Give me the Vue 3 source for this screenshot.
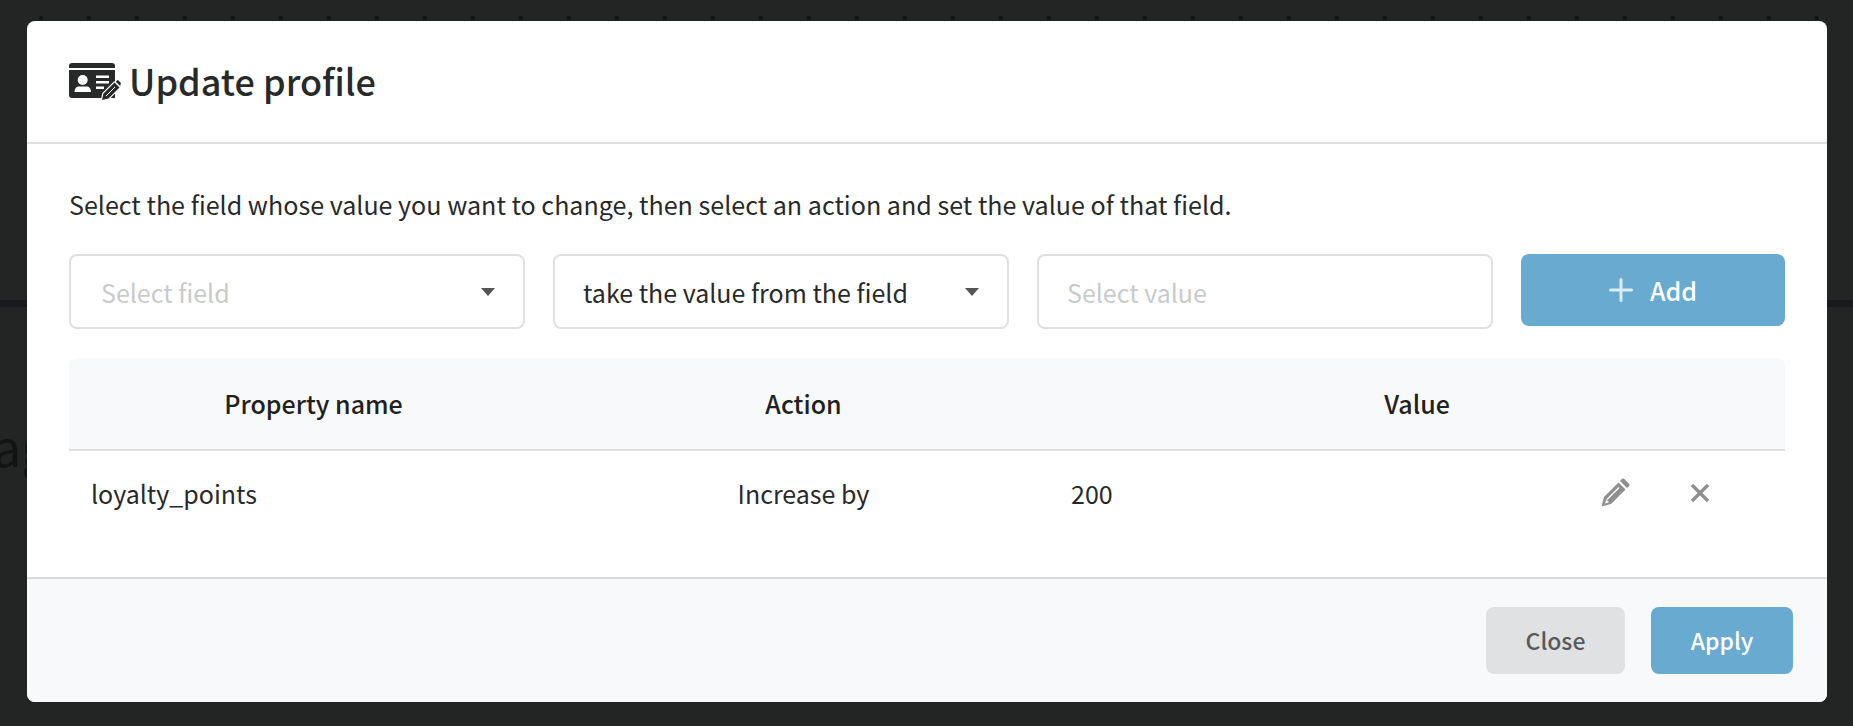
<template>
  <div class="page">
    <div class="backdrop">
      <div class="dots">
        <i v-for="n in 38" :key="n" class="dot"></i>
      </div>
      <div class="band"></div>
      <span class="behind-text">ag</span>
    </div>

    <div class="modal">
      <div class="modal-header">
        <svg class="title-icon" width="52" height="37" viewBox="0 0 52 37">
          <path fill="#282a2a" d="M3 0h40a3 3 0 0 1 3 3v2H0V3a3 3 0 0 1 3-3zM0 7h46v28H3a3 3 0 0 1-3-3z" />
          <circle cx="13.700" cy="17" r="5" fill="#fff" />
          <path fill="#fff" d="M5.500 29c0-3.500 2-5.500 4.500-5.500h7.500c2.500 0 4.500 2 4.500 5.500z" />
          <path fill="#fff" d="M27 12.500h13v2.500H27zM27 18h13v2.500H27zM27 23.500h8v2.500h-8z" />
          <path fill="#282a2a" stroke="#fff" stroke-width="2.400" stroke-linejoin="round" d="M33 37l1.500-6.500 11-11 5 5-11 11z" />
          <path fill="#282a2a" d="M33 37l1.500-6.500 11-11 5 5-11 11z" />
          <path stroke="#fff" stroke-width="1" d="M37 33l9-9" />
          <path fill="#282a2a" d="M46.800 18.700l1.200-1.200a1 1 0 0 1 1.500 0l2 2a1 1 0 0 1 0 1.500l-.2 2.200z" />
        </svg>
        <h2 class="title">Update profile</h2>
      </div>

      <div class="modal-body">
        <p class="hint">Select the field whose value you want to change, then select an action and set the value of that field.</p>

        <div class="form-row">
          <div class="control select placeholder field-select">
            <span>Select field</span>
            <i class="caret"></i>
          </div>
          <div class="control select">
            <span>take the value from the field</span>
            <i class="caret"></i>
          </div>
          <div class="control placeholder">
            <span>Select value</span>
          </div>
          <button class="btn btn-add">
            <svg width="24" height="24" viewBox="0 0 24 24" fill="none" stroke="#dcebf4" stroke-width="3" stroke-linecap="round">
              <line x1="12" y1="1.500" x2="12" y2="22.500"></line>
              <line x1="1.500" y1="12" x2="22.500" y2="12"></line>
            </svg>
            <span>Add</span>
          </button>
        </div>

        <div class="table">
          <div class="table-head">
            <div>Property name</div>
            <div>Action</div>
            <div>Value</div>
          </div>
          <div v-for="row in rows" :key="row.name" class="table-row">
            <div class="col-name">{{ row.name }}</div>
            <div class="col-action">{{ row.action }}</div>
            <div class="col-value">
              <span>{{ row.value }}</span>
              <div class="tools">
                <svg width="30" height="30" viewBox="0 0 30 30" fill="#8f8f8f">
                  <path d="M1.500 28.500L4 19 18.500 4.500 25.500 11.500 11 26z" />
                  <path d="M20 3l1.800-1.800a2 2 0 0 1 2.800 0l4.200 4.200a2 2 0 0 1 0 2.800L27 10z" />
                  <path fill="#fff" d="M5 25.500l1.200-4 2.800 2.800z" />
                  <path stroke="#fff" stroke-width="1.300" d="M7 21.500L19 9.500" />
                </svg>
                <svg width="20" height="20" viewBox="0 0 20 20" stroke="#8f8f8f" stroke-width="3.400" fill="none">
                  <line x1="2" y1="2" x2="18" y2="18"></line>
                  <line x1="18" y1="2" x2="2" y2="18"></line>
                </svg>
              </div>
            </div>
          </div>
        </div>
      </div>

      <div class="modal-footer">
        <button class="btn btn-close">Close</button>
        <button class="btn btn-apply">Apply</button>
      </div>
    </div>
  </div>
</template>

<script setup>
const rows = [
  { name: 'loyalty_points', action: 'Increase by', value: '200' }
];
</script>

<style>
html, body {
  background: #232524;
}
</style>

<style scoped>
.page {
  position: relative;
  width: 1853px;
  height: 726px;
  overflow: hidden;
  background: #232524;
  font-family: "Noto Sans CJK SC", "Noto Sans", sans-serif;
  color: #282a2a;
}

.backdrop {
  position: absolute;
  inset: 0;
}

.dots {
  position: absolute;
  top: 16px;
  left: 39px;
  display: flex;
  gap: 44px;
}

.dot {
  width: 4px;
  height: 4px;
  border-radius: 50%;
  background: #111312;
}

.band {
  position: absolute;
  top: 300px;
  left: 0;
  width: 100%;
  height: 7px;
  background: #17191c;
}

.behind-text {
  position: absolute;
  top: 413px;
  left: -7px;
  font-size: 50px;
  line-height: 64px;
  color: #121413;
}

.modal {
  position: absolute;
  top: 21px;
  left: 27px;
  width: 1800px;
  height: 681px;
  display: flex;
  flex-direction: column;
  background: #fff;
  border-radius: 8px;
  overflow: hidden;
}

.modal-header {
  height: 121px;
  flex: none;
  display: flex;
  align-items: center;
  gap: 8px;
  padding: 0 42px;
  border-bottom: 2px solid #dedfe0;
  box-sizing: content-box;
}

.title {
  margin: 0;
  padding-bottom: 4px;
  font-size: 36px;
  font-weight: 500;
  line-height: 48px;
}

.modal-body {
  flex: 1;
  padding: 42px 42px 0;
}

.hint {
  margin: 0;
  font-size: 25.08px;
  line-height: 36px;
}

.form-row {
  display: flex;
  gap: 28px;
  margin-top: 32px;
  align-items: flex-start;
}

.control {
  width: 456px;
  height: 75px;
  box-sizing: border-box;
  border: 2px solid #e0e0e0;
  border-radius: 8px;
  display: flex;
  align-items: center;
  justify-content: space-between;
  padding: 0 28px;
  font-size: 25px;
}

.field-select {
  padding-left: 30px;
}

.placeholder {
  color: #c9caca;
}

.caret {
  width: 0;
  height: 0;
  border-left: 7.5px solid transparent;
  border-right: 7.5px solid transparent;
  border-top: 8px solid #555;
}

.btn {
  border: none;
  border-radius: 8px;
  font-family: inherit;
  font-size: 25px;
  font-weight: 500;
  cursor: pointer;
}

.btn-add {
  width: 264px;
  height: 72px;
  background: #69aad0;
  color: #fff;
  display: flex;
  align-items: center;
  justify-content: center;
  gap: 17px;
}

.table {
  margin-top: 29px;
  font-size: 25px;
}

.table-head,
.table-row {
  display: grid;
  grid-template-columns: 489px 491px 1fr;
}

.table-head {
  height: 93px;
  padding-bottom: 2px;
  box-sizing: border-box;
  align-items: center;
  background: #f8f9fb;
  border-bottom: 2px solid #e0e1e3;
  border-radius: 8px 8px 0 0;
  font-weight: 500;
  color: #1f2121;
  text-align: center;
}

.table-row {
  height: 83px;
  align-items: center;
}

.col-name {
  padding-left: 22px;
}

.col-action {
  text-align: center;
}

.col-value {
  display: flex;
  align-items: center;
  justify-content: space-between;
  padding: 0 75px 0 22px;
}

.tools {
  display: flex;
  align-items: center;
  gap: 60px;
}

.modal-footer {
  height: 125px;
  flex: none;
  box-sizing: border-box;
  display: flex;
  align-items: center;
  justify-content: flex-end;
  gap: 26px;
  padding: 0 34px 0 0;
  background: #f8f9fb;
  border-top: 2px solid #d9dadb;
}

.btn-close,
.btn-apply {
  height: 67px;
  padding-bottom: 3px;
  font-size: 23px;
}

.btn-close {
  width: 139px;
  background: #e0e1e3;
  color: #5a5a5a;
}

.btn-apply {
  width: 142px;
  background: #69aad0;
  color: #fff;
}
</style>
